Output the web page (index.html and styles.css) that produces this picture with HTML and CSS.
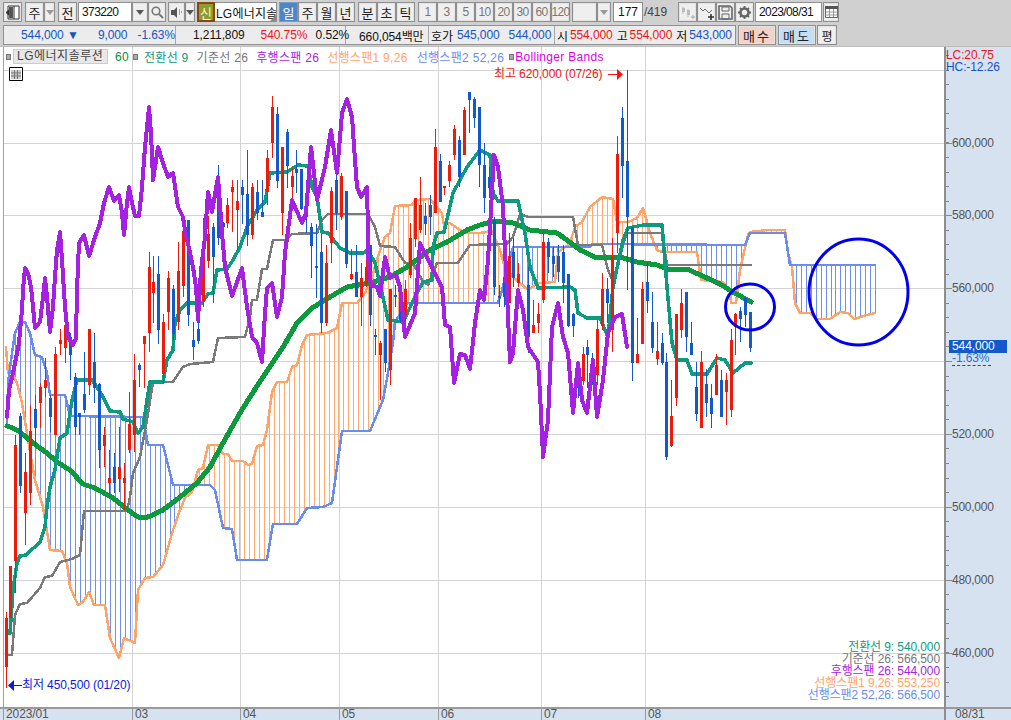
FILE: index.html
```html
<!DOCTYPE html>
<html lang="ko">
<head>
<meta charset="utf-8">
<title>LG에너지솔루션 차트</title>
<link rel="stylesheet" href="styles.css">
</head>
<body>
<header class="top">
  <div class="row one">
    <button class="btn w19 mr3"><svg width="15" height="15" viewBox="0 0 15 15"><path d="M3 1h11v13H3z" fill="#fff" stroke="#333"/><path d="M9 1v13M1 7.5 5 4v7z" stroke="#333" fill="#333"/><path d="M4 2h4v11H4z" fill="#555"/></svg></button>
    <button class="btn w19">주</button>
    <button class="btn w11 mr3 dim"><i class="tri"></i></button>
    <button class="btn w19 mr1">전</button>
    <div class="field w54">373220</div>
    <button class="btn w16"><i class="tri"></i></button>
    <button class="btn w18 mr2"><svg width="13" height="13" viewBox="0 0 13 13"><circle cx="5" cy="5" r="3.8" fill="none" stroke="#777" stroke-width="1.6"/><path d="m8 8 4 4" stroke="#777" stroke-width="2"/></svg></button>
    <button class="btn w17"><svg width="13" height="13" viewBox="0 0 13 13"><path d="M1 4h3l3-3v11L4 9H1z" fill="#555"/><path d="M9 4h1M11 6h1M9 6h1M9 8h1" stroke="#555"/></svg></button>
    <button class="btn w10 mr2"><i class="tri"></i></button>
    <div class="sin">신</div>
    <div class="field name w62 mr2">LG에너지솔<i class="corner"></i></div>
    <div class="group mr3">
      <button class="btn w19 on">일</button><button class="btn w19">주</button><button class="btn w19">월</button><button class="btn w19">년</button>
    </div>
    <div class="group mr3">
      <button class="btn w19">분</button><button class="btn w19">초</button><button class="btn w19">틱</button>
    </div>
    <div class="group mr2 muted">
      <button class="btn w19">1</button><button class="btn w19">3</button><button class="btn w19">5</button><button class="btn w19">10</button><button class="btn w19">20</button><button class="btn w19">30</button><button class="btn w19">60</button><button class="btn w19">120</button>
    </div>
    <button class="btn w25"></button>
    <button class="btn w14 mr2 dim"><i class="tri"></i></button>
    <div class="field w30 right">177</div>
    <div class="count">/419</div>
    <button class="btn w19"><svg width="15" height="15" viewBox="0 0 15 15"><path d="M3 2v7M8 4v8" stroke="#bbb"/><path d="M2 3h3v4H2zM7 5h3v5H7z" fill="#bbb"/><path d="M11 12h4M13 10v4" stroke="#bbb" stroke-width="1.4"/></svg></button>
    <button class="btn w19"><svg width="15" height="15" viewBox="0 0 15 15"><path d="m1 3 3 3 2-2 4 4 3-3" fill="none" stroke="#666"/><path d="M9 12h6M12 9v6" stroke="#333" stroke-width="1.6"/></svg></button>
    <button class="btn w19"><svg width="15" height="15" viewBox="0 0 15 15"><path d="M1 1h11l2 2v11H1z" fill="none" stroke="#666" stroke-width="1.6"/><path d="M4 2h7v4H4zM4 9h7v5H4z" fill="none" stroke="#666"/></svg></button>
    <button class="btn w19 mr1"><svg width="15" height="15" viewBox="0 0 15 15"><circle cx="7.5" cy="7.5" r="4" fill="none" stroke="#666" stroke-width="2.6"/><path d="M7.5 1v13M1 7.5h13M3 3l9 9M12 3l-9 9" stroke="#666" stroke-width="1.8" stroke-dasharray="2.4 8.2 2.4 0"/></svg></button>
    <div class="field w67 mr1">2023/08/31</div>
    <button class="btn w16"><svg width="13" height="12" viewBox="0 0 13 12"><path d="M.5 .5h12v11H.5z" fill="#fff" stroke="#666"/><path d="M0 0h13v3H0z" fill="#555"/><path d="M.5 6h12M.5 9h12M4.5 3v8M8.5 3v8" stroke="#999"/></svg></button>
  </div>
  <div class="row two">
    <div class="quote">
      <div class="cell c1">
        <span class="blue v1">544,000</span><span class="blue arrow">▼</span>
        <span class="blue v2">9,000</span><span class="blue v3">-1.63%</span>
      </div>
      <div class="cell c2">
        <span class="v4">1,211,809</span><span class="red v5">540.75%</span><span class="v6">0.52%</span>
      </div>
      <div class="cell c3"><span>660,054백만</span></div>
      <div class="cell c4"><span>호가</span><span class="blue">545,000</span><span class="blue gap6">544,000</span></div>
      <div class="cell c5">
        <span>시</span><span class="red">554,000</span><span class="gap4">고</span><span class="red">554,000</span><span class="gap4">저</span><span class="blue">543,000</span>
      </div>
    </div>
    <button class="btn trade buy">매수</button>
    <button class="btn trade sell">매도</button>
    <button class="btn w20 flat">평</button>
  </div>
</header>

<main class="stage">
  <div class="plot" id="plot">
    <div class="legend">
      <i class="sq"></i><span class="code">LG에너지솔루션</span><span class="l60">60</span>
      <i class="sq"></i><span class="lt">전환선 9</span><span class="lk">기준선 26</span><span class="lc">후행스팬 26</span><span class="la">선행스팬1 9,26</span><span class="lb">선행스팬2 52,26</span>
      <i class="sq"></i><span class="lbb">Bollinger Bands</span>
    </div>
    <div class="grid-icon"><svg width="14" height="14" viewBox="0 0 14 14"><path d="M.5 .5h13v13H.5z" fill="#fff" stroke="#000"/><path d="M2 3h10v9H2z" fill="#ccc"/><path d="M2 6h10M2 9h10M5.5 3v9M8.5 3v9" stroke="#777"/></svg></div>
    <div class="peak high">최고 620,000 (07/26)<svg width="15" height="11" viewBox="0 0 15 11"><path d="M0 5h9v1H0zM9 0l6 5.5-6 5.500z" fill="#f01414"/></svg></div>
    <div class="peak low"><svg width="14" height="11" viewBox="0 0 14 11"><path d="M14 5H6v1h8zM6 0 0 5.500l6 5.500z" fill="#0a18e8"/></svg>최저 450,500 (01/20)</div>
    <div class="values">
      <div class="lt">전환선 9: 540,000</div>
      <div class="lk">기준선 26: 566,500</div>
      <div class="lc">후행스팬 26: 544,000</div>
      <div class="la">선행스팬1 9,26: 553,250</div>
      <div class="lb">선행스팬2 52,26: 566,500</div>
    </div>
  </div>
  <aside class="axis" id="axis">
    <div class="lc-hc"><div class="red">LC:20.75</div><div class="hc">HC:-12.26</div></div>
    <div class="tag">544,000</div>
    <div class="tagpct">-1.63%</div>
  </aside>
  <div class="timeline" id="timeline"></div>
  <div class="enddate">08/31</div>
</main>
<script src="chart.js"></script>
</body>
</html>
```
FILE: styles.css
```css
* { box-sizing: border-box; }
html, body { margin: 0; padding: 0; }
body {
  width: 1011px;
  height: 720px;
  overflow: hidden;
  background: #fff;
  font: 12px "Liberation Sans", "Noto Sans CJK KR", sans-serif;
  letter-spacing: -.1px;
  color: #111;
}
.top { height: 47px; background: #d0d0d0; border-bottom: 1px solid #bcbcbc; padding: 2px 0 0 3px; }
.row { display: flex; align-items: stretch; }
.one { height: 20px; }
.two { height: 20px; margin-top: 3px; }
.btn {
  display: flex; align-items: center; justify-content: center;
  padding: 0; margin: 0; height: 100%;
  background: #efefef; border: 1px solid #8f8f8f; box-shadow: inset 0 0 0 1px #e4e4e4;
  font: inherit; font-size: 13px; color: #222; flex: none;
}
.group { display: flex; flex: none; }
.muted .btn { color: #777; font-size: 12px; letter-spacing: -.7px; }
.w10 { width: 10px; } .w11 { width: 11px; } .w14 { width: 14px; } .w16 { width: 16px; }
.w17 { width: 17px; } .w18 { width: 18px; } .w19 { width: 19px; } .w20 { width: 20px; }
.w25 { width: 25px; } .w30 { width: 30px; } .w54 { width: 54px; } .w62 { width: 62px; } .w67 { width: 67px; }
.mr1 { margin-right: 1px; } .mr2 { margin-right: 2px; } .mr3 { margin-right: 3px; }
.tri { width: 0; height: 0; border: 4px solid transparent; border-top: 5px solid #555; border-bottom: 0; }
.dim .tri { border-top-color: #999; }
.field {
  flex: none; display: flex; align-items: center; padding-left: 3px;
  background: #fff; border: 1px solid #8f8f8f; font-size: 12px; letter-spacing: -.6px; color: #111; white-space: nowrap; overflow: hidden;
}
.field.right { justify-content: flex-end; padding: 0 4px 0 0; letter-spacing: 0; }
.name { position: relative; border-left: 0; padding-left: 1px; letter-spacing: .2px; }
.corner { position: absolute; right: 0; bottom: 0; width: 0; height: 0; border: 3px solid #888; border-top-color: transparent; border-left-color: transparent; }
.on { background: #4d86c6; color: #fff; border-color: #7d9cc0; box-shadow: none; }
.sin {
  flex: none; width: 18px; background: #8e9c2e; border: 2px solid #8a4510;
  color: #f4f4d8; display: flex; align-items: center; justify-content: center; font-size: 13px;
}
.count { flex: none; width: 35px; padding-left: 1px; color: #444; font-size: 12px; line-height: 20px; }
.quote { flex: none; width: 733px; display: flex; background: #ececec; border: 1px solid #909090; margin-right: 2px; }
.cell { height: 100%; display: flex; align-items: center; border-right: 1px solid #a8a8a8; white-space: nowrap; font-size: 12px; flex: none; }
.cell:last-child { border-right: 0; }
.c1 { width: 172px; padding-left: 17px; }
.c2 { width: 170px; padding-left: 17px; }
.c3 { width: 83px; padding-left: 13px; }
.c4 { width: 126px; padding-left: 2px; gap: 4px; }
.c5 { padding-left: 2px; gap: 2px; }
.blue { color: #1553c8; }
.red { color: #f01414; }
.v1 { width: 42px; } .arrow { width: 16px; margin-left: 2px; font-size: 12px; text-align: center; }
.v2 { width: 47px; text-align: right; } .v3 { width: 48px; text-align: right; }
.v4 { width: 54px; } .v5 { width: 45px; margin-left: 16px; } .v6 { width: 32px; margin-left: 10px; }
.gap6 { margin-left: 5px; } .gap4 { margin-left: 2px; }
.trade { width: 38px; letter-spacing: 2px; margin-right: 2px; font-size: 13px; border-width: 1px; }
.buy { background: #f3d2c9; }
.sell { background: #c6def4; margin-right: 1px; }
.flat { font-size: 12px; }

.stage { position: relative; height: 673px; display: grid; grid-template-columns: 3px 941px 67px; grid-template-rows: 660px 13px; }
.plot { grid-column: 2; grid-row: 1; position: relative; border-left: 1px solid #a0a0a0; overflow: hidden; }
.plot svg.chart { display: block; position: absolute; left: 0; top: 0; }
.axis { grid-column: 3; grid-row: 1 / 3; position: relative; background: #d6e2f0; border-left: 2px solid #8e8e8e; overflow: hidden; }
.axis svg { position: absolute; left: 0; top: 0; }
.timeline { grid-column: 1 / 3; grid-row: 2; position: relative; background: #d6e2f0; border-top: 2px solid #9a9a9a; overflow: hidden; }
.enddate { position: absolute; right: 0; bottom: 0; left: 946px; height: 13px; border-top: 2px solid #9a9a9a; color: #555; padding-left: 9px; line-height: 11px; background: #d6e2f0; }
.tick-label { position: absolute; top: 0; color: #555; font-size: 12px; line-height: 11px; padding-left: 2px; border-left: 1px solid #9a9a9a; }
.price { position: absolute; left: 6px; color: #555; line-height: 14px; letter-spacing: -.25px; }

.legend { position: absolute; left: 2px; top: 2px; height: 15px; display: flex; align-items: center; white-space: nowrap; font-size: 12px; letter-spacing: .3px; }
.sq { width: 5px; height: 6px; background: #aaa; border: 1px solid #777; flex: none; }
.code { margin-left: 2px; background: #e8e8e8; border: 1px solid #ccc; padding: 0 3px; width: 95px; height: 15px; line-height: 13px; color: #444; letter-spacing: .5px; }
.l60 { color: #0c8a3c; margin-left: 7px; margin-right: 4px; }
.lt { color: #0c9a80; } .lk { color: #777; } .lc { color: #a41fe0; } .la { color: #ffa468; } .lb { color: #6a8cf0; } .lbb { color: #e000e0; margin-left: 1px; }
.legend .lt { margin-left: 6px; } .legend .lk, .legend .lc, .legend .la { margin-left: 8px; } .legend .lb { margin-left: 9px; margin-right: 5px; }
.grid-icon { position: absolute; left: 5px; top: 20px; height: 14px; }
.grid-icon svg { display: block; }
.peak { position: absolute; display: flex; align-items: center; white-space: nowrap; font-size: 12px; line-height: 14px; }
.high { left: 490px; top: 20px; color: #f01414; gap: 6px; }
.low { left: 4px; top: 631px; color: #0a18e8; }
.values { position: absolute; right: 4px; bottom: 5px; text-align: right; font-size: 12px; line-height: 11.9px; white-space: nowrap; }
.lc-hc { position: absolute; left: 0; top: 2px; line-height: 12px; z-index: 1; }
.hc { color: #1553c8; }
.tag { position: absolute; left: 3px; top: 293px; width: 58px; height: 13px; line-height: 13px; background: #1259cc; color: #fff; padding-left: 3px; z-index: 1; }
.tagpct { position: absolute; left: 6px; top: 305px; width: 39px; height: 14px; line-height: 13px; color: #1d6fd8; border-bottom: 1px dashed #444; z-index: 1; }
```
FILE: chart.js
```js
var NS = 'http://www.w3.org/2000/svg';
var orange = [[6,347],[8,373],[12,373],[17,383],[22,403],[28,440],[35,480],[43,507],[50,550],[62,551],[67,563],[70,587],[78,605],[83,602],[89,592],[94,605],[105,605],[110,638],[119,658],[124,638],[135,643],[138,590],[145,578],[153,577],[163,565],[173,530],[180,510],[185,498],[192,492],[198,470],[203,468],[208,445],[218,445],[223,454],[228,454],[232,461],[243,461],[248,465],[252,464],[257,446],[263,445],[267,430],[272,392],[277,382],[287,382],[292,367],[297,365],[302,345],[307,335],[327,333],[337,328],[342,303],[357,303],[365,293],[372,277],[380,250],[385,237],[390,233],[395,206],[412,205],[415,200],[430,199],[442,213],[444,225],[450,223],[457,228],[465,233],[480,233],[492,231],[500,250],[505,268],[513,277],[528,290],[538,283],[555,282],[558,253],[563,248],[569,245],[575,227],[582,222],[590,207],[602,197],[613,199],[617,222],[628,222],[637,218],[643,208],[650,233],[657,250],[662,252],[697,252],[701,280],[723,282],[730,292],[731,303],[736,303],[740,270],[748,235],[750,232],[767,230],[785,230],[788,253],[792,267],[795,303],[800,313],[810,313],[817,319],[830,319],[840,312],[848,313],[854,319],[867,315],[875,313]];
var span2 = [[7,427],[8,383],[12,353],[15,333],[20,322],[25,322],[30,333],[35,355],[42,357],[47,373],[50,395],[65,395],[70,416],[143,417],[148,445],[163,445],[173,485],[210,485],[215,490],[223,528],[232,529],[237,560],[267,560],[273,524],[297,524],[307,508],[323,507],[332,503],[342,431],[370,431],[383,400],[388,373],[393,343],[395,322],[403,310],[407,303],[498,303],[502,290],[512,250],[513,247],[590,247],[592,244],[745,245],[750,233],[785,233],[790,265],[875,265]];
var tenkan = [[8,633],[10,633],[13,590],[17,563],[20,556],[26,555],[40,542],[45,527],[47,507],[50,487],[55,470],[60,438],[67,433],[72,400],[77,380],[92,380],[97,387],[103,397],[110,411],[120,412],[123,419],[133,422],[138,433],[143,427],[147,400],[150,382],[163,382],[167,360],[173,350],[175,323],[180,310],[187,303],[202,303],[208,294],[213,293],[217,270],[227,269],[233,260],[240,247],[247,227],[257,210],[265,202],[270,173],[287,172],[298,165],[308,166],[312,187],[317,197],[322,232],[328,233],[340,248],[350,253],[363,253],[368,250],[375,263],[382,293],[388,320],[403,322],[417,293],[423,282],[432,280],[433,247],[437,233],[444,232],[453,193],[467,167],[480,150],[490,155],[493,193],[498,201],[518,201],[525,233],[530,267],[538,288],[570,287],[575,290],[578,313],[587,318],[600,318],[608,337],[613,287],[623,240],[628,228],[643,225],[662,225],[667,287],[672,343],[677,360],[687,360],[692,374],[707,374],[717,358],[725,360],[733,373],[745,363],[751,363]];
var kijun = [[8,655],[12,655],[15,615],[20,604],[27,603],[40,588],[45,577],[52,576],[60,562],[72,559],[80,555],[84,511],[127,511],[130,497],[133,473],[140,457],[147,420],[153,382],[173,382],[183,367],[190,364],[213,362],[218,338],[245,337],[250,317],[252,300],[257,300],[262,269],[267,269],[273,240],[285,240],[292,234],[317,233],[322,220],[328,214],[368,214],[375,227],[380,246],[395,247],[405,263],[413,263],[422,280],[428,285],[437,263],[458,263],[470,245],[507,244],[513,237],[520,214],[528,217],[573,217],[578,245],[602,245],[608,270],[613,282],[623,245],[627,233],[662,233],[667,265],[751,265]];
var chikou = [[7,417],[9,390],[13,373],[19,343],[22,310],[23,290],[25,268],[28,273],[31,287],[33,307],[35,328],[40,322],[43,297],[45,278],[47,297],[50,332],[53,307],[55,277],[57,250],[60,232],[62,260],[65,307],[68,337],[73,345],[76,338],[77,290],[79,243],[84,235],[89,256],[95,237],[100,223],[104,203],[109,187],[114,201],[119,195],[122,213],[124,235],[127,203],[129,187],[132,203],[135,216],[139,216],[142,187],[145,147],[149,107],[151,133],[153,180],[158,147],[163,163],[168,177],[173,173],[178,207],[183,217],[185,230],[190,253],[193,267],[196,287],[198,320],[201,270],[205,237],[208,192],[212,212],[218,177],[222,233],[225,267],[232,296],[242,268],[247,307],[252,337],[257,343],[262,362],[265,313],[267,288],[272,283],[277,317],[282,297],[285,253],[292,200],[302,223],[306,213],[311,147],[317,200],[325,167],[331,130],[337,173],[342,113],[347,99],[352,117],[355,160],[357,187],[361,197],[367,187],[368,230],[368,257],[371,285],[377,287],[380,296],[385,257],[390,278],[396,275],[400,287],[405,337],[415,313],[420,243],[433,270],[442,287],[445,325],[450,327],[454,383],[460,354],[465,355],[470,369],[475,323],[480,290],[484,300],[488,260],[491,210],[494,155],[498,167],[503,207],[507,293],[510,362],[513,353],[518,290],[523,310],[528,347],[538,362],[540,393],[543,457],[548,420],[552,327],[558,303],[563,337],[568,353],[573,413],[578,363],[582,400],[587,413],[593,360],[597,417],[603,380],[608,333],[615,317],[622,314],[627,347]];
var ma = [[7,426],[13,428],[20,432],[33,443],[47,453],[57,462],[70,470],[83,484],[95,488],[113,498],[128,510],[138,517],[148,517],[163,510],[180,497],[197,483],[210,467],[223,443],[240,413],[248,400],[263,377],[283,347],[297,323],[312,308],[330,297],[347,287],[370,283],[390,277],[407,267],[430,250],[447,242],[467,230],[480,225],[495,221],[513,223],[530,230],[557,233],[567,240],[580,250],[597,258],[620,257],[637,262],[657,265],[670,270],[687,269],[707,278],[720,284],[733,292],[751,302]];

// x, wick top, wick bottom, body top, body bottom
var redC = [[6,612,688,618,667],[10,566,618,566,618],[15,435,593,445,561],[25,453,545,472,513],[30,405,505,431,493],[40,383,428,387,403],[45,358,397,380,388],[55,347,435,354,435],[60,329,355,340,344],[65,323,363,325,348],[89,329,395,329,385],[104,427,467,435,446],[109,450,497,478,483],[119,427,492,467,479],[124,463,510,478,483],[129,392,453,424,450],[134,354,452,380,435],[144,336,388,336,344],[149,252,352,267,333],[153,256,323,282,293],[163,314,383,322,374],[168,271,330,278,312],[178,242,330,271,322],[183,223,297,231,286],[203,218,307,242,301],[208,216,268,234,261],[227,198,228,205,223],[232,180,232,187,192],[237,180,250,201,210],[252,183,239,187,235],[267,150,205,158,192],[272,96,158,107,143],[282,147,235,147,213],[292,168,202,176,187],[326,245,326,263,323],[331,187,263,191,243],[341,173,220,176,217],[351,249,280,274,279],[361,263,326,278,297],[366,257,287,267,285],[380,341,400,343,355],[390,289,385,289,370],[405,280,337,289,315],[410,223,278,238,275],[415,198,247,198,239],[420,177,233,205,230],[435,129,213,147,213],[444,186,195,186,188],[449,161,187,165,181],[454,125,160,129,155],[464,107,155,110,155],[509,233,303,256,303],[518,263,287,274,283],[533,300,333,325,333],[538,303,333,314,323],[543,231,303,242,300],[583,347,385,354,381],[597,320,385,329,375],[602,273,330,289,326],[612,238,352,257,330],[617,136,253,154,233],[637,318,363,354,363],[642,282,344,289,344],[657,322,365,351,359],[671,380,447,416,446],[676,314,406,314,398],[681,289,338,303,330],[701,351,428,362,428],[716,354,395,365,395],[726,373,425,380,392],[731,329,417,340,410],[735,313,355,314,327]];
var blueC = [[20,413,493,416,486],[35,395,447,409,428],[50,395,432,398,417],[70,333,380,337,355],[75,373,435,377,427],[79,413,435,413,417],[84,352,413,394,410],[94,333,403,362,388],[99,383,468,384,450],[114,453,493,467,483],[139,363,387,365,370],[158,256,344,274,330],[173,285,340,289,334],[188,220,326,220,315],[193,322,360,340,347],[198,292,344,292,323],[198,329,344,329,341],[213,223,303,227,257],[218,165,245,187,238],[223,222,263,223,227],[242,180,224,187,195],[247,150,246,194,235],[257,180,220,192,213],[262,180,217,212,217],[277,107,188,114,181],[287,129,188,132,166],[296,150,193,169,173],[301,169,210,169,209],[306,193,233,209,217],[311,223,278,227,246],[316,224,298,266,268],[321,234,333,252,323],[336,173,230,180,213],[346,191,268,191,264],[356,245,297,272,297],[370,245,326,245,315],[375,329,355,335,337],[385,329,372,329,363],[395,285,307,295,297],[400,283,323,290,320],[425,203,235,216,224],[430,195,235,205,217],[440,154,202,161,202],[459,136,187,140,177],[469,92,133,92,100],[474,97,128,99,118],[479,107,187,107,165],[484,143,213,165,198],[489,167,198,177,188],[494,217,295,220,287],[499,285,307,296,298],[504,270,307,277,297],[513,238,287,252,278],[528,267,353,285,337],[548,238,273,242,257],[553,247,277,256,264],[558,245,282,256,272],[563,245,303,252,283],[568,274,327,274,326],[573,313,337,314,326],[578,362,398,367,385],[587,340,388,347,355],[592,353,385,358,375],[607,278,323,289,303],[622,107,198,118,166],[627,70,290,161,217],[632,227,381,227,363],[647,262,313,282,301],[652,292,353,322,348],[662,333,365,343,363],[666,353,460,362,457],[686,292,352,292,337],[691,322,355,343,355],[696,362,421,387,414],[706,369,417,384,403],[711,384,428,398,414],[721,370,417,380,417],[740,307,342,311,319],[745,297,327,298,315],[750,312,352,312,348]];

function el(name, attrs) {
  var node = document.createElementNS(NS, name);
  for (var key in attrs) node.setAttribute(key, attrs[key]);
  return node;
}
function poly(svg, pts, color, width) {
  svg.appendChild(el('polyline', {
    points: pts.map(function (p) { return p.join(','); }).join(' '),
    fill: 'none', stroke: color, 'stroke-width': width,
    'stroke-linejoin': 'round', 'stroke-linecap': 'round', 'shape-rendering': 'crispEdges'
  }));
}
function at(pts, x) {
  if (x < pts[0][0] || x > pts[pts.length - 1][0]) return null;
  for (var i = 1; i < pts.length; i++) {
    if (x <= pts[i][0]) {
      var a = pts[i - 1], b = pts[i];
      return b[0] === a[0] ? b[1] : a[1] + (b[1] - a[1]) * (x - a[0]) / (b[0] - a[0]);
    }
  }
  return null;
}
function box(svg, x, y, w, h, color) {
  svg.appendChild(el('rect', { x: x, y: y, width: w, height: h, fill: color, 'shape-rendering': 'crispEdges' }));
}

var plot = document.getElementById('plot');
var svg = el('svg', { 'class': 'chart', width: 940, height: 660, viewBox: '4 47 940 660' });

[70, 143, 215, 288, 361, 434, 507, 580, 653].forEach(function (y) { box(svg, 4, y, 940, 1, '#d3d3d3'); });
[132, 240, 339, 438, 541, 645].forEach(function (x) { box(svg, x, 47, 1, 660, '#d3d3d3'); });

for (var k = 0; k < 176; k++) {
  var hx = Math.round(5.5 + k * 4.97);
  var a = at(orange, hx), b = at(span2, hx);
  if (a === null || b === null || Math.abs(a - b) < 1) continue;
  box(svg, hx, Math.min(a, b), 1, Math.abs(a - b), b < a ? '#6f90ee' : '#ffa96e');
}
poly(svg, orange, '#ffa468', 2.5);
poly(svg, span2, '#6a8cf0', 2.5);
poly(svg, kijun, '#7a7a7a', 2.5);
poly(svg, ma, '#0c9a3c', 5);
poly(svg, tenkan, '#0c9a80', 3.5);

function candles(list, color) {
  list.forEach(function (c) {
    box(svg, c[0], c[1], 1, c[2] - c[1], color);
    box(svg, c[0] - 1, c[3], 3, Math.max(c[4] - c[3], 1), color);
  });
}
candles(blueC, '#1259cc');
candles(redC, '#ee1a0c');
poly(svg, chikou, '#a620e2', 4);

[[750, 307, 24.5, 23], [858.5, 292, 49.5, 53]].forEach(function (c) {
  svg.appendChild(el('ellipse', { cx: c[0], cy: c[1], rx: c[2], ry: c[3], fill: 'none', stroke: '#0000ee', 'stroke-width': 3 }));
});
plot.insertBefore(svg, plot.firstChild);

var axis = document.getElementById('axis');
var ticks = el('svg', { width: 67, height: 673, viewBox: '0 47 67 673' });
for (var t = 0; t < 46; t++) {
  box(ticks, 0, 55 + Math.round(t * 14.57), 3, 1, '#888');
}
[143, 215, 288, 361, 434, 507, 580, 653].forEach(function (y) { box(ticks, 0, y, 6, 1, '#888'); });
axis.insertBefore(ticks, axis.firstChild);
[[143, '600,000'], [215, '580,000'], [288, '560,000'], [434, '520,000'], [507, '500,000'], [580, '480,000'], [653, '460,000']].forEach(function (p) {
  var label = document.createElement('div');
  label.className = 'price';
  label.textContent = p[1];
  label.style.top = (p[0] - 54) + 'px';
  axis.appendChild(label);
});

var line = document.getElementById('timeline');
[[3, '2023/01'], [132, '03'], [240, '04'], [339, '05'], [438, '06'], [541, '07'], [645, '08']].forEach(function (p) {
  var label = document.createElement('div');
  label.className = 'tick-label';
  label.textContent = p[1];
  label.style.left = p[0] + 'px';
  line.appendChild(label);
});
```
